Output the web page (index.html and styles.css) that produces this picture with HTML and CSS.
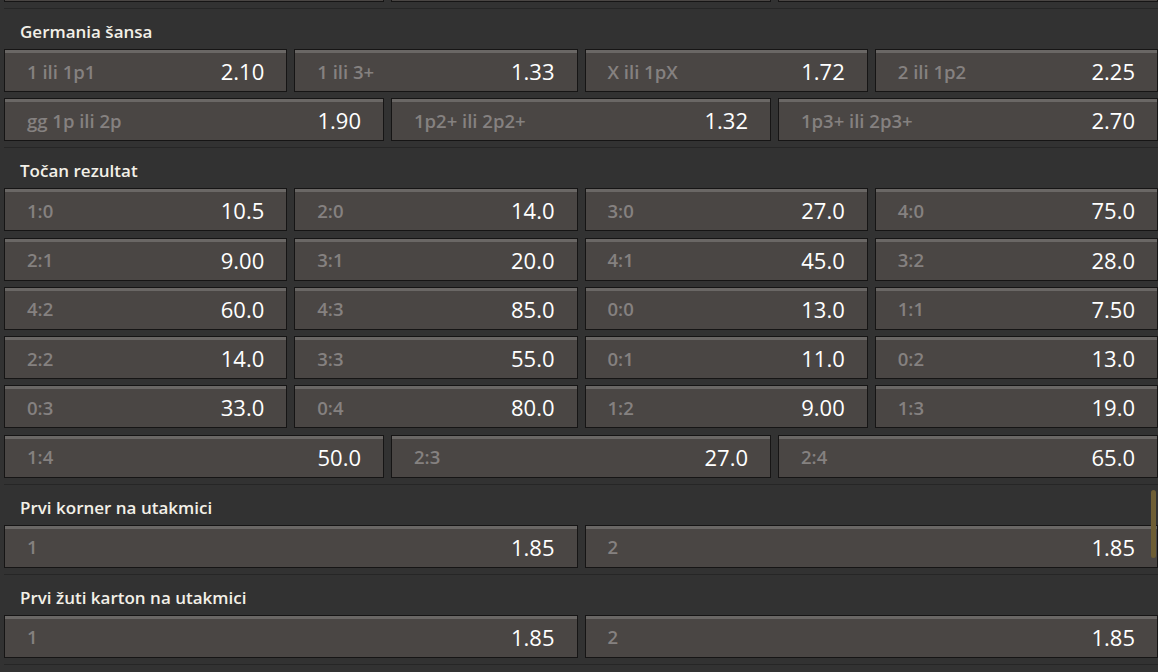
FILE: index.html
```html
<!DOCTYPE html>
<html lang="hr">
<head>
<meta charset="utf-8">
<title>Oklade</title>
<link rel="stylesheet" href="styles.css">
</head>
<body>
<div class="markets">
  <section class="market market-partial">
    <div class="row cols-3">
      <div class="odd"></div><div class="odd"></div><div class="odd"></div>
    </div>
  </section>

  <section class="market">
    <h2 class="market-title">Germania šansa</h2>
    <div class="rows">
      <div class="row cols-4">
        <div class="odd"><span class="label">1 ili 1p1</span><span class="value">2.10</span></div>
        <div class="odd"><span class="label">1 ili 3+</span><span class="value">1.33</span></div>
        <div class="odd"><span class="label">X ili 1pX</span><span class="value">1.72</span></div>
        <div class="odd"><span class="label">2 ili 1p2</span><span class="value">2.25</span></div>
      </div>
      <div class="row cols-3">
        <div class="odd"><span class="label">gg 1p ili 2p</span><span class="value">1.90</span></div>
        <div class="odd"><span class="label">1p2+ ili 2p2+</span><span class="value">1.32</span></div>
        <div class="odd"><span class="label">1p3+ ili 2p3+</span><span class="value">2.70</span></div>
      </div>
    </div>
  </section>

  <section class="market">
    <h2 class="market-title">Točan rezultat</h2>
    <div class="rows">
      <div class="row cols-4">
        <div class="odd"><span class="label">1:0</span><span class="value">10.5</span></div>
        <div class="odd"><span class="label">2:0</span><span class="value">14.0</span></div>
        <div class="odd"><span class="label">3:0</span><span class="value">27.0</span></div>
        <div class="odd"><span class="label">4:0</span><span class="value">75.0</span></div>
      </div>
      <div class="row cols-4">
        <div class="odd"><span class="label">2:1</span><span class="value">9.00</span></div>
        <div class="odd"><span class="label">3:1</span><span class="value">20.0</span></div>
        <div class="odd"><span class="label">4:1</span><span class="value">45.0</span></div>
        <div class="odd"><span class="label">3:2</span><span class="value">28.0</span></div>
      </div>
      <div class="row cols-4">
        <div class="odd"><span class="label">4:2</span><span class="value">60.0</span></div>
        <div class="odd"><span class="label">4:3</span><span class="value">85.0</span></div>
        <div class="odd"><span class="label">0:0</span><span class="value">13.0</span></div>
        <div class="odd"><span class="label">1:1</span><span class="value">7.50</span></div>
      </div>
      <div class="row cols-4">
        <div class="odd"><span class="label">2:2</span><span class="value">14.0</span></div>
        <div class="odd"><span class="label">3:3</span><span class="value">55.0</span></div>
        <div class="odd"><span class="label">0:1</span><span class="value">11.0</span></div>
        <div class="odd"><span class="label">0:2</span><span class="value">13.0</span></div>
      </div>
      <div class="row cols-4">
        <div class="odd"><span class="label">0:3</span><span class="value">33.0</span></div>
        <div class="odd"><span class="label">0:4</span><span class="value">80.0</span></div>
        <div class="odd"><span class="label">1:2</span><span class="value">9.00</span></div>
        <div class="odd"><span class="label">1:3</span><span class="value">19.0</span></div>
      </div>
      <div class="row cols-3">
        <div class="odd"><span class="label">1:4</span><span class="value">50.0</span></div>
        <div class="odd"><span class="label">2:3</span><span class="value">27.0</span></div>
        <div class="odd"><span class="label">2:4</span><span class="value">65.0</span></div>
      </div>
    </div>
  </section>

  <section class="market">
    <h2 class="market-title">Prvi korner na utakmici</h2>
    <div class="rows">
      <div class="row cols-2">
        <div class="odd"><span class="label">1</span><span class="value">1.85</span></div>
        <div class="odd"><span class="label">2</span><span class="value">1.85</span></div>
      </div>
    </div>
  </section>

  <section class="market">
    <h2 class="market-title">Prvi žuti karton na utakmici</h2>
    <div class="rows">
      <div class="row cols-2">
        <div class="odd"><span class="label">1</span><span class="value">1.85</span></div>
        <div class="odd"><span class="label">2</span><span class="value">1.85</span></div>
      </div>
    </div>
  </section>

  <section class="market market-next"></section>
</div>
<div class="scroll-thumb"></div>
</body>
</html>
```

FILE: styles.css
```css
html, body {
  margin: 0;
  padding: 0;
  background: #323232;
  overflow: hidden;
}

body {
  font-family: "Open Sans", "Liberation Sans", sans-serif;
  color: #f2efe8;
}

.markets {
  padding-left: 4px;
}

.market {
  border-top: 1px solid #262626;
  padding-bottom: 6px;
}

.market-partial {
  border-top: 0;
  margin-top: -41px;
}

.market-title {
  margin: 0;
  padding: 13px 0 7px 16px;
  font-size: 17px;
  line-height: 20px;
  font-weight: 600;
  color: #f3f0e8;
}

.rows {
  display: flex;
  flex-direction: column;
  row-gap: 6.3px;
}

.row {
  display: grid;
  column-gap: 7px;
}

.cols-2 { grid-template-columns: repeat(2, 1fr); }
.cols-3 { grid-template-columns: repeat(3, 1fr); }
.cols-4 { grid-template-columns: repeat(4, 1fr); }

.odd {
  box-sizing: border-box;
  height: 43px;
  display: flex;
  align-items: center;
  justify-content: space-between;
  padding: 1px 22px 0 22px;
  background: #4a4644;
  border: 1px solid #161515;
  box-shadow: inset 0 3px 0 #6a6765;
}

.label {
  font-size: 18.5px;
  font-weight: 600;
  color: #858180;
  white-space: nowrap;
}

.value {
  font-size: 22px;
  color: #ffffff;
  white-space: nowrap;
}

.scroll-thumb {
  position: absolute;
  top: 490px;
  right: 2px;
  width: 5px;
  height: 68px;
  border-radius: 3px;
  background: #6e5e35;
}
```
